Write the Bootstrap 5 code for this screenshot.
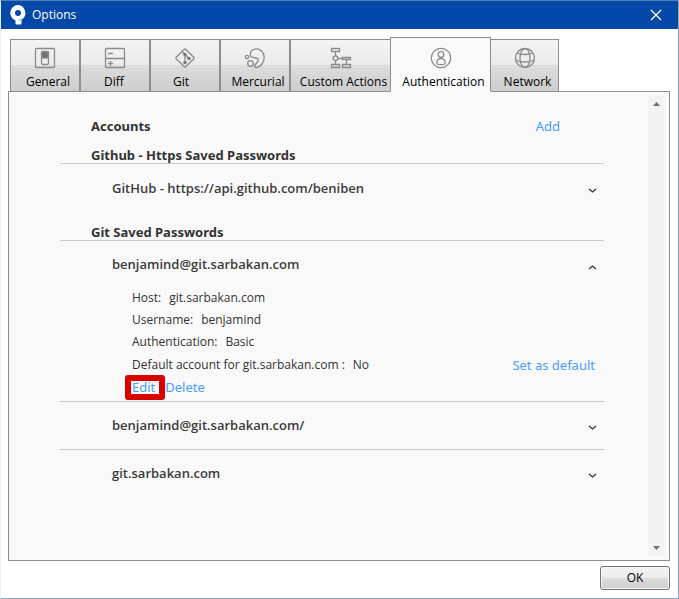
<!DOCTYPE html>
<html lang="en">
<head>
<meta charset="utf-8">
<meta name="viewport" content="width=device-width, initial-scale=1">
<title>Options</title>
<link href="https://cdn.jsdelivr.net/npm/bootstrap@5.3.0/dist/css/bootstrap.min.css" rel="stylesheet">
<style>
  body { font-family: "Open Sans", "Noto Sans", sans-serif; font-size: 12px; line-height: 16px; color: #333; background: #fff; }
  .window { border: 1px solid #8fa5be; border-left-color: #eceff3; border-top-color: #4f80bd; }
  .title-bar { height: 28px; background: #0548a8; color: #fff; padding: 0 16px 0 8px; }
  .title-text { padding-left: 5px; }
  .btn-plain { border: 0; padding: 0; background: none; color: inherit; line-height: 1; }
  .tab-strip { padding: 8px 9px 0; border: 0; gap: 0; }
  .tab-strip .nav-link { width: 70px; height: 53px; margin: 0 0 -1px; padding: 6px 0 0; border: 1px solid #8c8e94; border-radius: 0; color: #000; background: linear-gradient(#f3f3f3, #ebebeb 50%, #dddddd 50%, #cdcdcd); }
  .tab-strip .nav-link.wide-tab { width: 101px; }
  .tab-strip .nav-link.active { position: relative; z-index: 1; width: 101px; height: 55px; margin: 0 -1px -1px; padding-top: 7px; background: #f9f9f9; color: #000; border-color: #8c8e94 #8c8e94 #f9f9f9; }
  .tab-strip .end-tab { width: 69px; }
  .tab-strip svg { display: block; margin: 0 auto 5px; fill: none; stroke: #8a8a8a; stroke-width: 1.3; }
  .tab-caption { display: block; padding-left: 6px; white-space: nowrap; }
  .tab-caption.short { padding: 0 2px 0 0; }
  .panel { border: 1px solid #8c8e94; background: #f9f9f9; margin: 0 8px 0 7px; padding: 4px 4px 4px 51px; }
  .accounts { padding: 21px 0 0; margin-right: 44px; }
  .group-title, .account-name, .action { font-family: "Noto Sans", "Open Sans", sans-serif; font-size: 13px; line-height: 18px; margin: 0; }
  .group-title { font-weight: 700; padding-left: 31px; }
  .group-head { border-bottom: 1px solid #c8c8c8; line-height: 16px; }
  .account-head { padding: 0 7px 0 52px; height: 48px; }
  .account-name { font-family: "Open Sans", "Noto Sans", sans-serif; font-weight: 600; color: #3c3c3c; padding-bottom: 2px; }
  .divided { border-bottom: 1px solid #c8c8c8; }
  .first-account { height: 60px; padding-bottom: 10px; }
  .details { padding: 0 9px 5px 72px; line-height: 18px; }
  .details dl > div { height: 22px; }
  .details dl > div:last-child { height: 23px; padding-top: 1px; }
  .action { color: #4a9cfc; text-decoration: none; }
  .add-link { margin-right: 44px; }
  .delete-link { padding-left: 10px; }
  .marked { position: relative; }
  .marked::after { content: ""; position: absolute; inset: -3px -10px -4px -7px; border: 6px solid #d90000; border-radius: 3px; pointer-events: none; }
  .scroll-track { width: 17px; background: #f3f3f3; padding: 5px 0; }
  .ok-btn { width: 70px; height: 24px; margin-top: 5px; padding: 0; font-size: 12px; line-height: 20px; color: #000; border: 1px solid #707070; border-radius: 3px; background: linear-gradient(#f3f3f3, #ebebeb 50%, #dddddd 50%, #cdcdcd); box-shadow: inset 0 0 0 1px #fafafa; }
</style>
<script src="https://cdn.jsdelivr.net/npm/bootstrap@5.3.0/dist/js/bootstrap.bundle.min.js"></script>
</head>
<body>
<div class="window d-flex flex-column min-vh-100">
  <header class="title-bar d-flex align-items-center">
    <svg width="18" height="20" viewBox="0 0 18 20" aria-hidden="true"><path d="M9 0a8 8 0 0 1 3.500 14.800V18.500q0 1-1 1H7.500q-1 0-1-1V15.500A8 8 0 0 1 9 0Zm0 5a3 3 0 1 0 0 6 3 3 0 0 0 0-6Z" fill="#fff" fill-rule="evenodd"/><path d="M8 14.500q3 .3 6-1.800l-1.500 2.200v1.600Z" fill="#a9c3e6"/></svg>
    <span class="title-text">Options</span>
    <button type="button" class="btn-plain ms-auto" aria-label="Close"><svg class="d-block" width="12" height="12" viewBox="0 0 12 12" fill="none" stroke="#fff" stroke-width="1.3"><path d="M1 1l10 10M11 1L1 11"/></svg></button>
  </header>

  <nav class="nav nav-tabs tab-strip align-items-end flex-nowrap" role="tablist">
    <button type="button" role="tab" class="nav-link"><svg width="22" height="22" viewBox="0 0 22 22"><rect x="1.500" y="1.500" width="19" height="19" rx="1"/><rect x="7.500" y="4.500" width="7" height="13" rx="1.500"/><path d="M8 5h6v6H8Z" fill="#6d6d6d"/></svg><span class="tab-caption">General</span></button>
    <button type="button" role="tab" class="nav-link"><svg width="22" height="22" viewBox="0 0 22 22"><rect x="1.500" y="1.500" width="19" height="19" rx="1"/><path d="M1.500 11.500h19M4 6.500h5M4 16.500h5M6.500 14v5"/></svg><span class="tab-caption short">Diff</span></button>
    <button type="button" role="tab" class="nav-link"><svg width="22" height="22" viewBox="0 0 22 22"><path d="M10.300 2.200q.7-.7 1.400 0l8.100 8.100q.7.7 0 1.400l-8.100 8.100q-.7.7-1.400 0l-8.100-8.100q-.7-.7 0-1.400ZM8 4.500l3 3v8M11 7.500l4 4"/><g fill="#777" stroke="none"><circle cx="11" cy="7.500" r="1.700"/><circle cx="11" cy="15.500" r="1.700"/><circle cx="15" cy="11.500" r="1.700"/></g></svg><span class="tab-caption short pe-2">Git</span></button>
    <button type="button" role="tab" class="nav-link"><svg width="22" height="22" viewBox="0 0 22 22"><path d="M6.500 6.500C7 1.500 14 .5 17.500 4c3.500 3.500 3.500 9 .5 13-2.500 3.500-7 4.500-7.500 2.500-.4-2.500 5-4 3.500-7.500-1-2-5-.5-6.800-2.300-.7-.8-.9-2-.7-3.200Z"/><circle cx="3" cy="10" r="1.700"/><circle cx="6.500" cy="16.500" r="2.800"/></svg><span class="tab-caption">Mercurial</span></button>
    <button type="button" role="tab" class="nav-link wide-tab"><svg width="22" height="22" viewBox="0 0 22 22"><path d="M1.500 1.500h8v3h-8ZM1.500 17.500h8v3h-8ZM12.500 10.500h8v2h-8ZM12.500 17.500h8v3h-8ZM5.500 4.500v4.200M5.500 13.500v4M7.900 11.500h4.600M16.500 12.500v5"/><circle cx="5.500" cy="11.200" r="2.400"/></svg><span class="tab-caption">Custom Actions</span></button>
    <button type="button" role="tab" class="nav-link active" aria-selected="true"><svg width="22" height="22" viewBox="0 0 22 22"><circle cx="11" cy="11" r="9.700"/><circle cx="11" cy="7.500" r="2.800"/><path d="M7 17c-.5-3.500.8-5.500 4-5.500s4.500 2 4 5.500q-4 1.300-8 0Z"/></svg><span class="tab-caption">Authentication</span></button>
    <button type="button" role="tab" class="nav-link end-tab"><svg width="22" height="22" viewBox="0 0 22 22"><circle cx="11" cy="11" r="9.500"/><ellipse cx="11" cy="11" rx="5" ry="9.500"/><path d="M3 6q8 3 16 0M1.500 13q9.500 4 19 0"/></svg><span class="tab-caption">Network</span></button>
  </nav>

  <main class="panel d-flex flex-grow-1">
    <div class="accounts flex-grow-1">
      <div class="d-flex justify-content-between align-items-center pb-2 mb-1">
        <h1 class="group-title">Accounts</h1>
        <a href="#" class="action add-link">Add</a>
      </div>
      <h2 class="group-title group-head">Github - Https Saved Passwords</h2>
      <div class="account-head first-account d-flex justify-content-between align-items-center">
        <h3 class="account-name">GitHub - https://api.github.com/beniben</h3>
        <button type="button" class="btn-plain pt-1" aria-label="Expand GitHub"><svg class="d-block" width="9" height="6" viewBox="0 0 9 6" fill="none" stroke="#333" stroke-width="1.300"><path d="M1 1l3.500 3L8 1"/></svg></button>
      </div>
      <h2 class="group-title group-head">Git Saved Passwords</h2>
      <div class="account-head d-flex justify-content-between align-items-center">
        <h3 class="account-name">benjamind@git.sarbakan.com</h3>
        <button type="button" class="btn-plain pt-1" aria-label="Collapse benjamind@git.sarbakan.com" aria-expanded="true"><svg class="d-block" width="9" height="6" viewBox="0 0 9 6" fill="none" stroke="#333" stroke-width="1.300"><path d="M1 5l3.500-3L8 5"/></svg></button>
      </div>
      <section class="details divided">
        <dl class="mb-0">
          <div class="d-flex"><dt class="fw-normal pe-2">Host:</dt><dd class="mb-0">git.sarbakan.com</dd></div>
          <div class="d-flex"><dt class="fw-normal pe-2">Username:</dt><dd class="mb-0">benjamind</dd></div>
          <div class="d-flex"><dt class="fw-normal pe-2">Authentication:</dt><dd class="mb-0">Basic</dd></div>
          <div class="d-flex"><dt class="fw-normal pe-2">Default account for git.sarbakan.com :</dt><dd class="mb-0">No</dd><dd class="mb-0 ms-auto"><a href="#" class="action">Set as default</a></dd></div>
        </dl>
        <div class="d-flex"><a href="#" class="action marked">Edit</a><a href="#" class="action delete-link">Delete</a></div>
      </section>
      <div class="account-head divided d-flex justify-content-between align-items-center">
        <h3 class="account-name">benjamind@git.sarbakan.com/</h3>
        <button type="button" class="btn-plain pt-1" aria-label="Expand benjamind@git.sarbakan.com/"><svg class="d-block" width="9" height="6" viewBox="0 0 9 6" fill="none" stroke="#333" stroke-width="1.300"><path d="M1 1l3.500 3L8 1"/></svg></button>
      </div>
      <div class="account-head d-flex justify-content-between align-items-center">
        <h3 class="account-name">git.sarbakan.com</h3>
        <button type="button" class="btn-plain pt-1" aria-label="Expand git.sarbakan.com"><svg class="d-block" width="9" height="6" viewBox="0 0 9 6" fill="none" stroke="#333" stroke-width="1.300"><path d="M1 1l3.500 3L8 1"/></svg></button>
      </div>
    </div>
    <div class="scroll-track d-flex flex-column justify-content-between align-items-center">
      <button type="button" class="btn-plain" aria-label="Scroll up"><svg class="d-block" width="7" height="6" viewBox="0 0 7 6"><path d="M0 5L3.500 1 7 5Z" fill="#707070"/></svg></button>
      <button type="button" class="btn-plain" aria-label="Scroll down"><svg class="d-block" width="7" height="6" viewBox="0 0 7 6"><path d="M0 1l3.500 4L7 1Z" fill="#707070"/></svg></button>
    </div>
  </main>
  <footer class="d-flex justify-content-end pb-2 px-2">
    <button type="button" class="ok-btn">OK</button>
  </footer>
</div>
</body>
</html>
